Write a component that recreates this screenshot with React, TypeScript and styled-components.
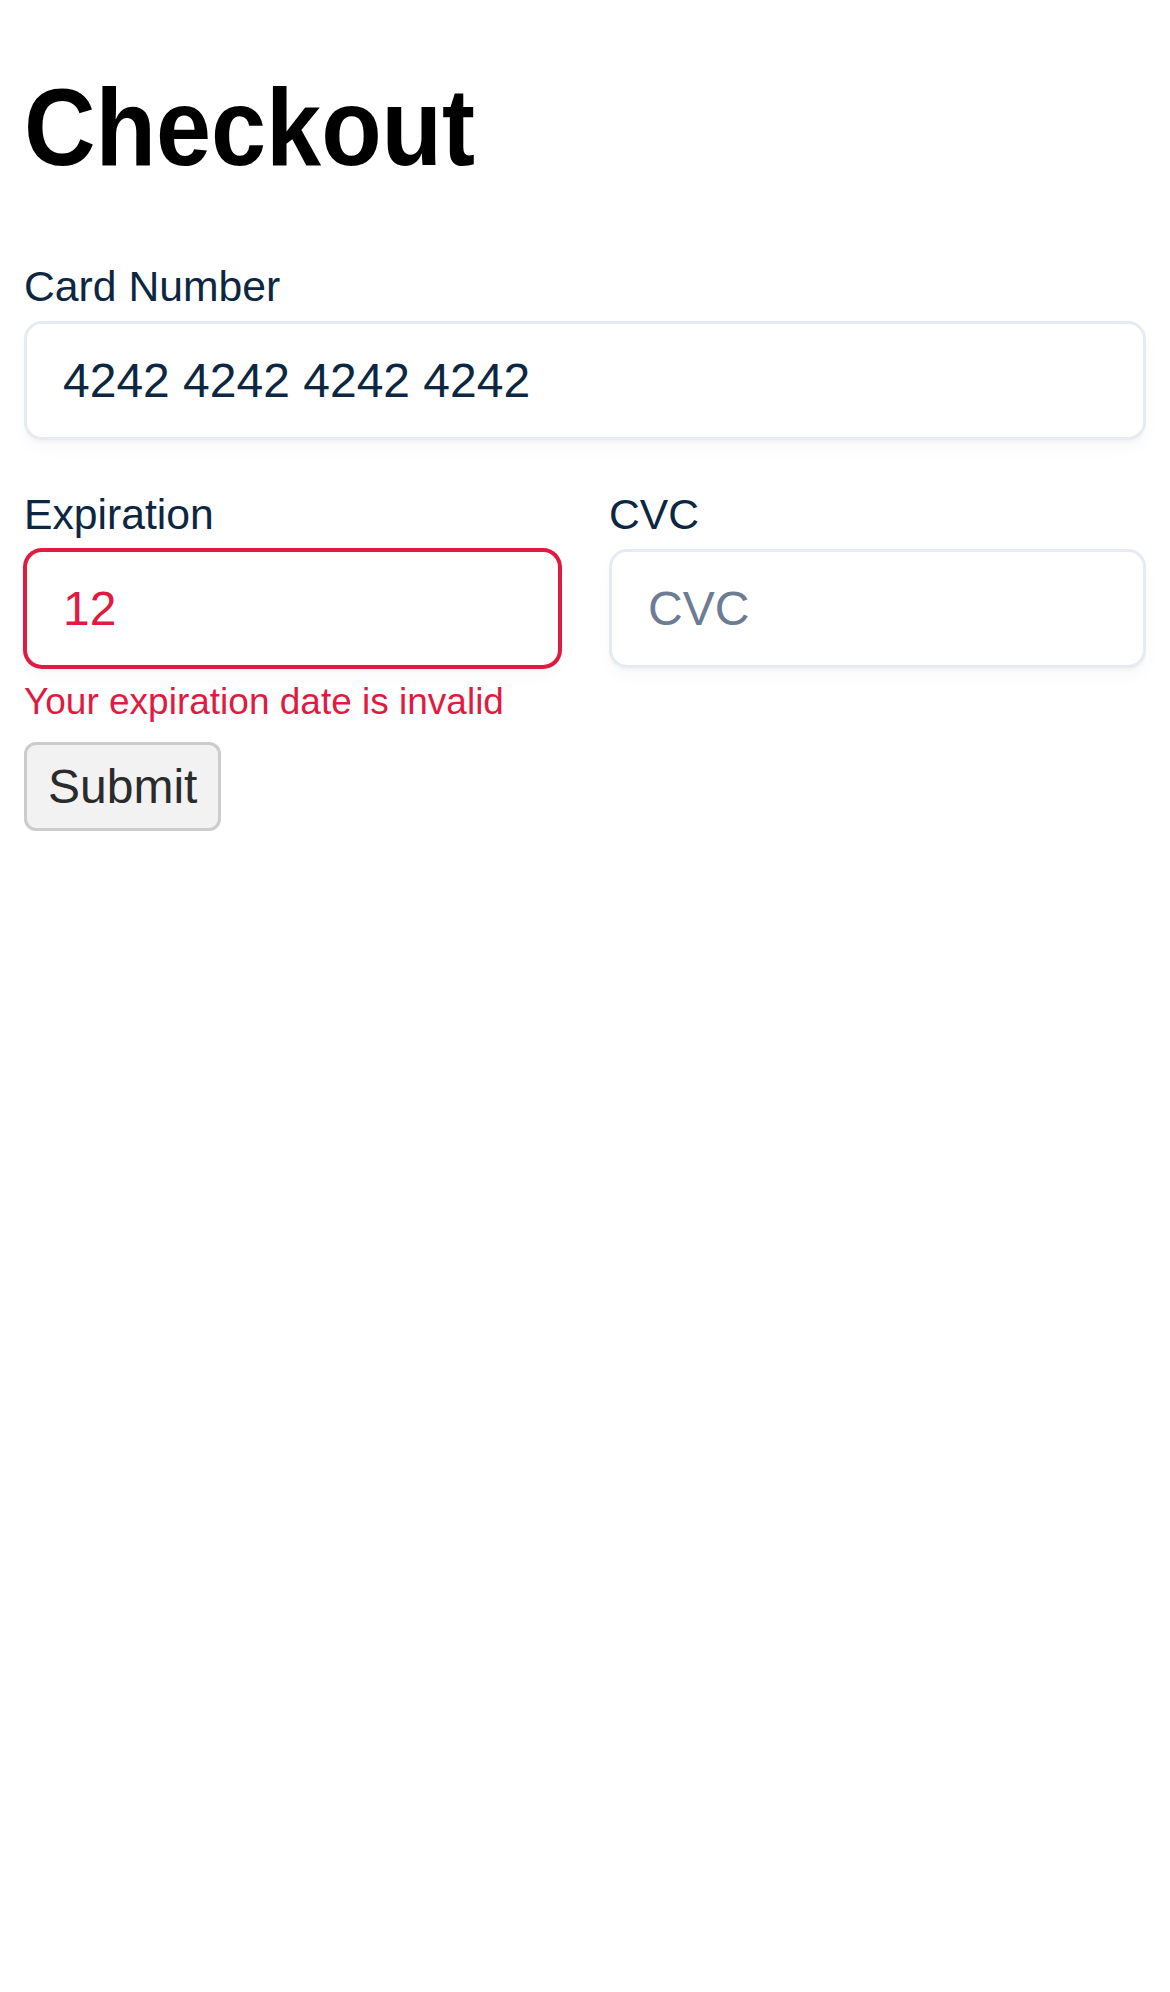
import React from "react";
import styled, { createGlobalStyle, css } from "styled-components";

const GlobalStyle = createGlobalStyle`
  html, body {
    margin: 0;
    padding: 0;
    background: #ffffff;
  }
  body {
    font-family: "Liberation Sans", Arial, sans-serif;
  }
`;

const Page = styled.main`
  padding: 64px 24px 24px;
  box-sizing: border-box;
  width: 1170px;
  min-height: 1992px;
`;

const Heading = styled.h1`
  margin: 0 0 72px;
  font-family: "Liberation Sans Narrow", "Arial Narrow", "Liberation Sans", sans-serif;
  font-weight: 700;
  font-size: 110px;
  line-height: 126px;
  color: #000000;
  transform: scaleX(0.9);
  transform-origin: left center;
`;

const Form = styled.form`
  display: flex;
  flex-direction: column;
  align-items: flex-start;
`;

const Field = styled.div`
  display: flex;
  flex-direction: column;
  width: 100%;
  min-width: 0;
`;

const Row = styled.div`
  display: grid;
  grid-template-columns: 1fr 1fr;
  gap: 48px;
  width: 100%;
  margin-top: 50px;
`;

const Label = styled.label`
  font-size: 42.7px;
  line-height: 48px;
  color: #0d2742;
  margin-bottom: 11px;
`;

const Input = styled.input<{ $invalid?: boolean }>`
  box-sizing: border-box;
  width: 100%;
  height: 119px;
  padding: 0 36px;
  font-family: "Liberation Sans", Arial, sans-serif;
  font-size: 48px;
  color: #0d2742;
  background: #ffffff;
  border: 3px solid #e6ebf1;
  border-radius: 18px;
  outline: none;
  box-shadow: 0 3px 3px rgba(0, 0, 0, 0.03), 0 9px 18px rgba(0, 0, 0, 0.025);

  &::placeholder {
    color: #6b7c93;
  }

  ${(p) =>
    p.$invalid &&
    css`
      color: #df1b41;
      border-color: #df1b41;
      box-shadow: 0 0 0 1px #df1b41, 0 3px 3px rgba(0, 0, 0, 0.03),
        0 9px 18px rgba(0, 0, 0, 0.025);
    `}
`;

const ErrorText = styled.div`
  margin-top: 13px;
  font-size: 37px;
  line-height: 41px;
  color: #df1b41;
`;

const SubmitButton = styled.button`
  margin-top: 20px;
  padding: 14px 21px 14px;
  font-family: "Liberation Sans", Arial, sans-serif;
  font-size: 48px;
  line-height: 55px;
  color: #2b2b2b;
  background: #f2f2f2;
  border: 3px solid #cccccc;
  border-radius: 12px;
  cursor: pointer;
`;

export default function App() {
  return (
    <>
      <GlobalStyle />
      <Page>
        <Heading>Checkout</Heading>
        <Form onSubmit={(e) => e.preventDefault()}>
          <Field>
            <Label htmlFor="card">Card Number</Label>
            <Input id="card" readOnly defaultValue="4242 4242 4242 4242" />
          </Field>
          <Row>
            <Field>
              <Label htmlFor="exp">Expiration</Label>
              <Input id="exp" $invalid readOnly defaultValue="12" />
              <ErrorText>Your expiration date is invalid</ErrorText>
            </Field>
            <Field>
              <Label htmlFor="cvc">CVC</Label>
              <Input id="cvc" readOnly placeholder="CVC" />
            </Field>
          </Row>
          <SubmitButton type="submit">Submit</SubmitButton>
        </Form>
      </Page>
    </>
  );
}
